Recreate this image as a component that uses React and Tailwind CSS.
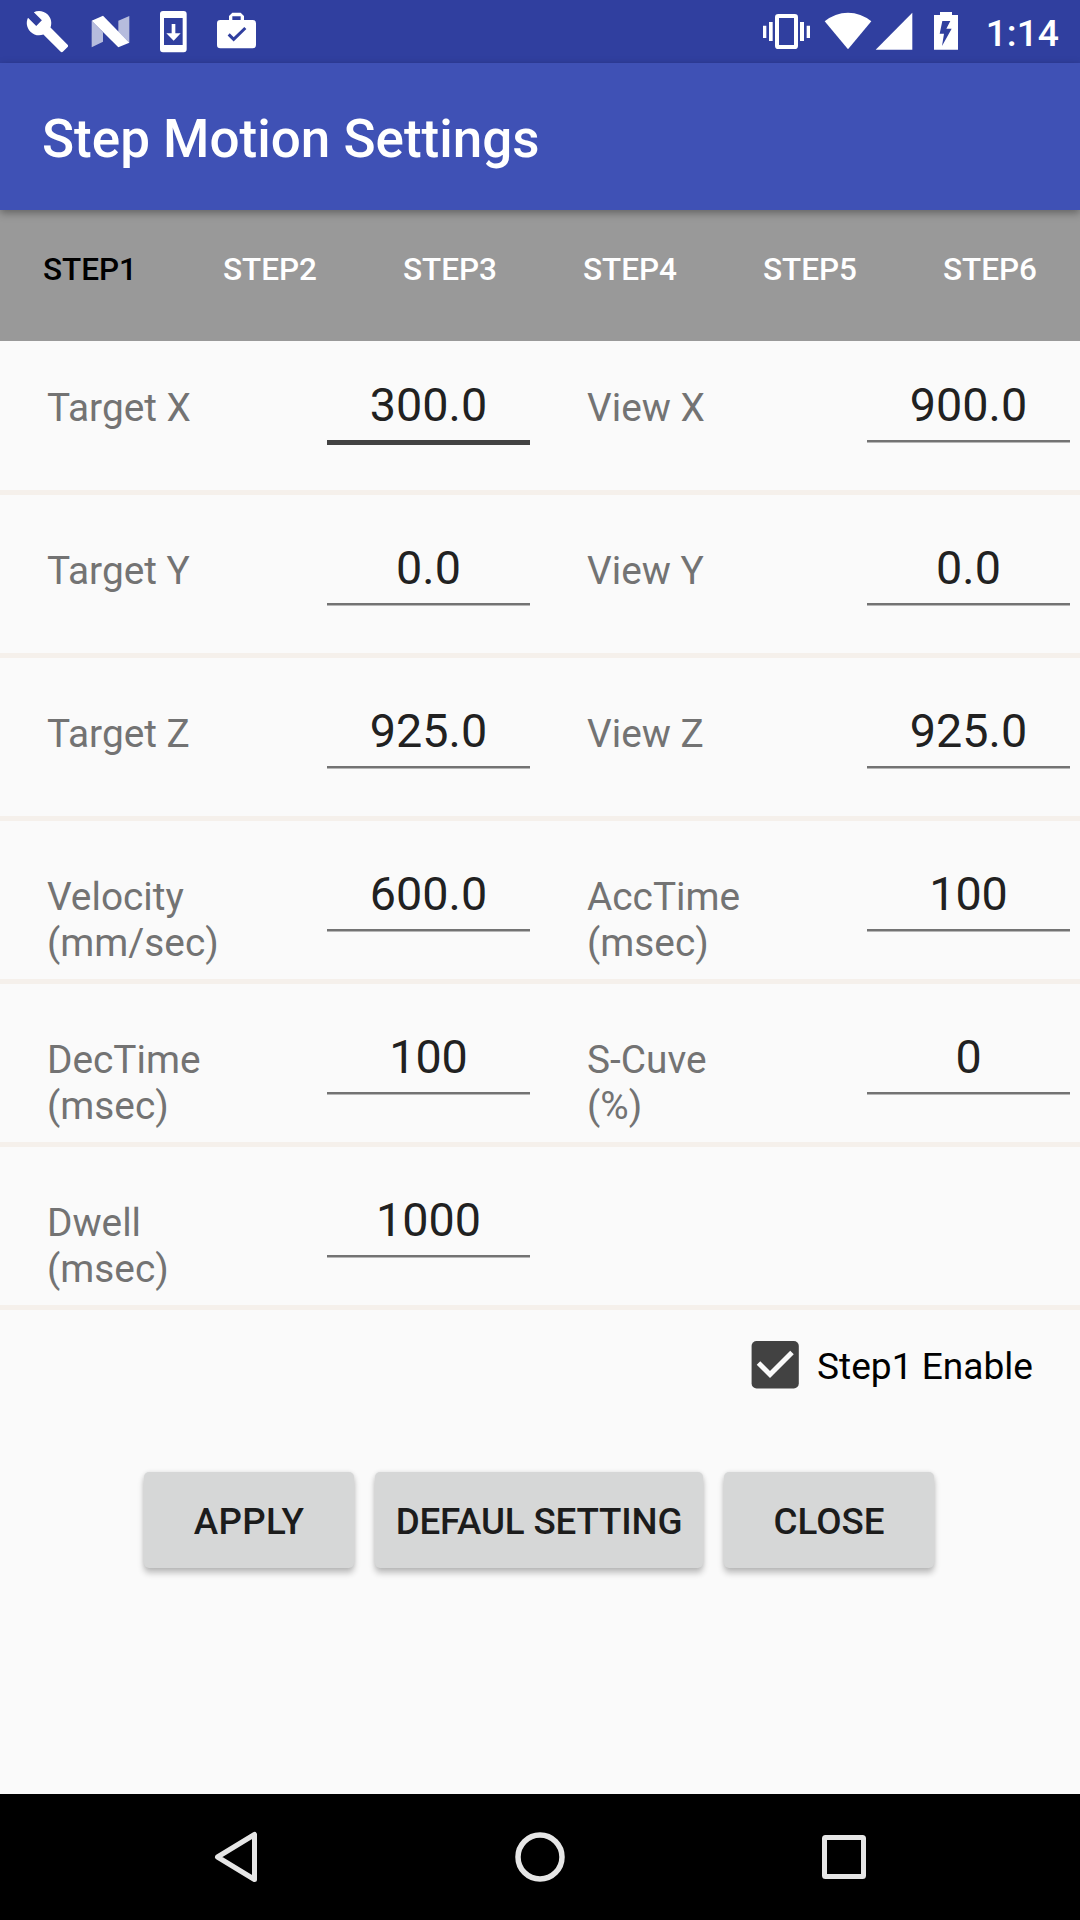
import React, { useState } from 'react'
import { MdBuild } from 'react-icons/md'
import clsx from 'clsx'

const STEPS = ['STEP1', 'STEP2', 'STEP3', 'STEP4', 'STEP5', 'STEP6']

const ROWS = [
  [{ label: 'Target X', value: '300.0', focused: true }, { label: 'View X', value: '900.0' }],
  [{ label: 'Target Y', value: '0.0' }, { label: 'View Y', value: '0.0' }],
  [{ label: 'Target Z', value: '925.0' }, { label: 'View Z', value: '925.0' }],
  [{ label: 'Velocity', unit: '(mm/sec)', value: '600.0' }, { label: 'AccTime', unit: '(msec)', value: '100' }],
  [{ label: 'DecTime', unit: '(msec)', value: '100' }, { label: 'S-Cuve', unit: '(%)', value: '0' }],
  [{ label: 'Dwell', unit: '(msec)', value: '1000' }],
]

function StatusBar() {
  return (
    <div className="flex h-[63px] items-center justify-between bg-[#303f9f] pl-4 pr-[21px] text-white">
      {/* Notifications */}
      <div className="flex">
        <div className="flex size-[63px] items-center justify-center">
          <MdBuild className="size-[45px]" />
        </div>
        <svg viewBox="0 0 189 189" className="size-[63px]" fill="currentColor">
          <path d="M38 62L72 97V125L38 142Z" opacity="0.65" />
          <path d="M118 62L151 48V128L118 95Z" opacity="0.65" />
          <path d="M38 62L72 47L151 128L118 142Z" />
        </svg>
        <svg viewBox="0 0 189 189" className="size-[63px]" fill="currentColor">
          <path fillRule="evenodd" d="M63 33H125a9 9 0 0 1 9 9V148a9 9 0 0 1-9 9H63a9 9 0 0 1-9-9V42a9 9 0 0 1 9-9ZM66 54V135H122V54Z" />
          <path d="M89 72H100V100H116L95 122L73 100H89Z" />
        </svg>
        <svg viewBox="0 0 189 189" className="size-[63px]" fill="currentColor">
          <path fillRule="evenodd" d="M72 60V48L82 38H107L117 48V60H143a10 10 0 0 1 10 10V135a10 10 0 0 1-10 10H46a10 10 0 0 1-10-10V70a10 10 0 0 1 10-10ZM82 49V60H107V49Z" />
          <path d="M71 103L86 118L121 84" fill="none" stroke="#303f9f" strokeWidth="9" />
        </svg>
      </div>

      {/* System icons */}
      <div className="flex items-center">
        <svg viewBox="0 0 147 189" className="h-[63px] w-[49px]" fill="currentColor">
          <path d="M3 77H13V114H3ZM21 66H32V123H21ZM114 66H126V123H114ZM134 77H144V114H134Z" />
          <rect x="45" y="48" width="57" height="93" rx="4" fill="none" stroke="currentColor" strokeWidth="12" />
        </svg>
        <svg viewBox="0 0 144 189" className="ml-[13px] h-[63px] w-12" fill="currentColor">
          <path d="M2 64Q33 38 72 38T142 64L72 148Z" />
        </svg>
        <svg viewBox="0 0 114 189" className="ml-[3px] h-[63px] w-[38px]" fill="currentColor">
          <path d="M2 149L112 38V149Z" />
        </svg>
        <svg viewBox="0 0 78 189" className="ml-5 h-[63px] w-[26px]" fill="currentColor">
          <path d="M3 45H21V36H57V45H75V149H3Z" />
          <path d="M28 63H52L40 86H56L27 138L33 101H20Z" fill="#303f9f" />
        </svg>
        <span className="ml-[27px] pt-[3px] text-[37.25px] leading-[43px] font-medium">1:14</span>
      </div>
    </div>
  )
}

function Field({ label, unit, value, focused }) {
  return (
    <div className="flex w-[540px] items-start pl-[47px] pr-[10px]">
      <div className="w-[280px] pt-[53px] text-[38.8px] leading-[46px] text-[#737373]">
        <p>{label}</p>
        {unit && <p>{unit}</p>}
      </div>
      <div
        className={clsx(
          'mt-[46px] w-[203px] pb-[7px] text-center text-[46.7px] leading-[55px] text-[#212121]',
          focused ? 'border-b-5 border-[#424242]' : 'border-b-2 border-[#737373] shadow-[0_1px_0_rgba(115,115,115,0.5)]'
        )}
      >
        {value}
      </div>
    </div>
  )
}

function RaisedButton({ children, className }) {
  return (
    <button
      className={clsx(
        'h-24 rounded-[5px] bg-[#d6d7d7] pt-1 text-[36.75px] font-medium text-[#1c1c1c] shadow-[0_5px_6px_rgba(0,0,0,0.24),0_0_4px_rgba(0,0,0,0.1)]',
        className
      )}
    >
      {children}
    </button>
  )
}

function NavBar() {
  return (
    <div className="flex h-[126px] items-center justify-between bg-black px-[205px] text-[#e6e6e6]">
      <svg viewBox="0 0 62 62" className="size-[62px]" fill="none" stroke="currentColor" strokeWidth="5" strokeLinejoin="round">
        <path d="M49.5 8.5V53.5L12.5 31Z" />
      </svg>
      <svg viewBox="0 0 62 62" className="size-[62px]" fill="none" stroke="currentColor" strokeWidth="5.5">
        <circle cx="31" cy="31" r="22" />
      </svg>
      <svg viewBox="0 0 62 62" className="size-[62px]" fill="none" stroke="currentColor" strokeWidth="5">
        <rect x="11.5" y="11.5" width="39" height="39" rx="1" />
      </svg>
    </div>
  )
}

export default function App() {
  const [step, setStep] = useState('STEP1')
  const [enabled, setEnabled] = useState(true)

  return (
    <div className="flex h-[1920px] w-[1080px] flex-col overflow-hidden bg-[#fafafa] font-['Roboto',sans-serif]">
      <StatusBar />

      <header className="relative z-20 flex h-[147px] items-center bg-[#3f51b5] pt-[5px] pl-[42px] shadow-[0_3px_8px_rgba(0,0,0,0.35)]">
        <h1 className="text-[53px] leading-[62px] font-medium text-white">Step Motion Settings</h1>
      </header>

      {/* Step tabs */}
      <nav className="relative z-10 -mb-[9px] grid h-[131px] grid-cols-6 bg-[#999999]">
        {STEPS.map((name) => (
          <button
            key={name}
            onClick={() => setStep(name)}
            className={clsx(
              'pb-[13px] text-center text-[31.5px] leading-[37px] font-medium',
              step === name ? 'text-black' : 'text-white'
            )}
          >
            {name}
          </button>
        ))}
      </nav>

      {/* Parameters */}
      <div>
        {ROWS.map((fields) => (
          <div key={fields[0].label} className="flex h-[163px] border-b-5 border-[#f5f0eb]">
            {fields.map((field) => (
              <Field key={field.label} {...field} />
            ))}
          </div>
        ))}
      </div>

      <label className="mt-[31px] flex h-12 items-center pl-[751px]">
        <input type="checkbox" className="sr-only" checked={enabled} onChange={() => setEnabled(!enabled)} />
        <svg viewBox="0 0 48 48" className="size-12">
          <rect x="0.6" width="47.2" height="47.5" rx="5" fill="#424242" />
          {enabled && <path d="M7.5 22L19 33.5L41 11.5" fill="none" stroke="#fafafa" strokeWidth="5" />}
        </svg>
        <span className="ml-[18px] pt-0.5 text-[37.1px] leading-[43px] text-black">Step1 Enable</span>
      </label>

      {/* Actions */}
      <div className="mt-[83px] flex justify-center gap-[21px] pr-0.5">
        <RaisedButton className="w-[210px] tracking-[0.3px]">APPLY</RaisedButton>
        <RaisedButton className="w-[328px] tracking-[-0.15px]">DEFAUL SETTING</RaisedButton>
        <RaisedButton className="w-[210px]">CLOSE</RaisedButton>
      </div>

      <div className="mt-auto">
        <NavBar />
      </div>
    </div>
  )
}
